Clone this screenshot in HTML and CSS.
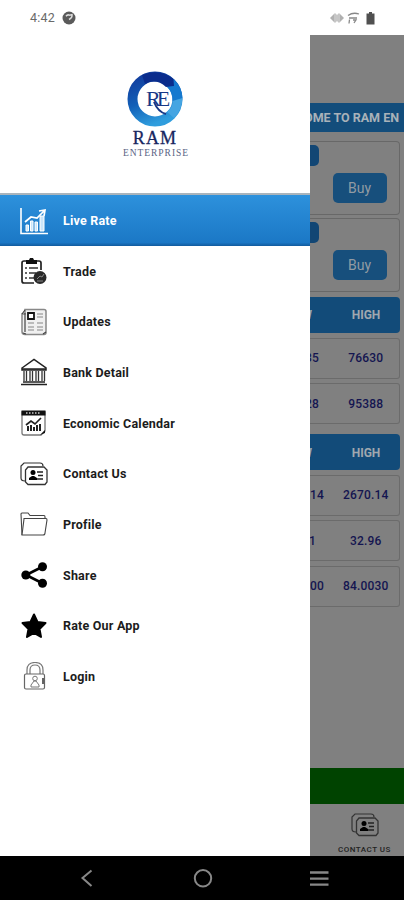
FILE: index.html
```html
<!DOCTYPE html>
<html lang="en">
<head>
<meta charset="utf-8">
<meta name="viewport" content="width=device-width">
<title>Ram Enterprise</title>
<link rel="stylesheet" href="styles.css">
</head>
<body>
<header class="status">
  <span class="clock">4:42</span>
  <svg class="status-app" width="14" height="14" viewBox="0 0 14 14"><circle cx="7" cy="7" r="6.500" fill="#5a5a5a"/><path d="M4 5.200Q5.500 3.200 7.500 4.200L10 3.600Q10.500 6.500 7 8.500" fill="none" stroke="#ddd" stroke-width="1.500"/></svg>
  <svg class="status-icons" width="46" height="14" viewBox="0 0 46 14">
    <path d="M0 7l4-4v8zM14 7l-4-4v8z" fill="#b0b0b0"/><path d="M5 2.500v9M7 3.500v7M9 2.500v9" stroke="#a0a0a0" stroke-width="1.200"/>
    <path d="M18 4.500Q23 1 29 3M19 7h8M19.500 8.500l-.5 4M23 9h3l-2 3" fill="none" stroke="#888" stroke-width="1.300"/>
    <path d="M36.500 2.500H39V1h3v1.500h2.500V13.500h-8z" fill="#505050"/>
  </svg>
</header>
<main class="screen">
  <aside class="drawer">
    <div class="brand">
      <svg class="logo" width="56" height="56" viewBox="0 0 56 56">
        <defs><linearGradient id="ring" x1=".2" y1="0" x2=".6" y2="1"><stop offset="0" stop-color="#1240a0"/><stop offset=".5" stop-color="#1260b8"/><stop offset="1" stop-color="#2f9ddd"/></linearGradient></defs>
        <circle cx="28" cy="28" r="22.500" fill="none" stroke="url(#ring)" stroke-width="10"/>
        <path d="M15 4Q32-3 46 7.500L47 15L39 16Q29 7 18 13z" fill="#0a2c8c"/>
        <path d="M47 8.500Q55 16 55.500 27L45.500 30Q45.500 21 40 16L47 15z" fill="#1579cf"/>
        <path d="M55.500 27Q55 39 47 47L40 41Q46 36 45.500 30z" fill="#45a5e2"/>
        <text class="monogram" x="19" y="35">RE</text>
        <path d="M27 31Q31 41 39 43" fill="none" stroke="#173887" stroke-width="2"/>
      </svg>
      <div class="brand-name">RAM</div>
      <div class="brand-sub">ENTERPRISE</div>
    </div>
    <nav class="menu">
      <a class="item active"><svg class="icon" viewBox="0 0 28 28"><path d="M1 1v25.500h27" fill="none" stroke="#fff" stroke-width="1.600"/><path d="M6 24v-6h2.500v6zM10.500 24V14H13v10zM15 24v-9h2.500v9zM20 24V9h4v15z" fill="#c9e5fa" stroke="#fff"/><path d="M5 15l6-5 6 1 7-7M19 4l6-1-1 6" fill="none" stroke="#fff" stroke-width="1.700"/></svg><span>Live Rate</span></a>
      <a class="item"><svg class="icon" viewBox="0 0 28 28"><path d="M7 4H4Q2 4 2 6v18q0 2 2 2h10M17 4h2q2 0 2 2v7" fill="none" stroke="#222" stroke-width="1.700"/><path d="M6 3h3l1-2h3l1 2h3v4H6z" fill="#111"/><path d="M5 11h2M9 11h9M5 16h2M9 16h7M5 21h2M9 21h5" stroke="#333" stroke-width="1.500"/><circle cx="20" cy="20.500" r="6.500" fill="#292929"/><path d="M17 22l3-3 2 1 2-3M17 24h6" fill="none" stroke="#888"/></svg><span>Trade</span></a>
      <a class="item"><svg class="icon" viewBox="0 0 28 28"><path d="M5 1.500h19q2 0 2 2v21q0 2-2 2H5q-3 0-3-3V6h3z" fill="#f0f0f0" stroke="#888" stroke-width="1.500"/><path d="M5 5v19M2 6l3-4M3 25l3 1M23 26l3-2" stroke="#444" stroke-width="1.200"/><path d="M8 5h6v6H8z" fill="#fff" stroke="#111" stroke-width="1.800"/><path d="M17 6h6M17 9h6M8 15h6M17 15h6M8 19h6M17 19h6M8 22h6M17 22h6" stroke="#bbb" stroke-width="2"/></svg><span>Updates</span></a>
      <a class="item"><svg class="icon" viewBox="0 0 28 28"><path d="M2 10L14 1.500 26 10v2H2z" fill="#fff" stroke="#222" stroke-width="1.500"/><path d="M2 11h24M3 24h22M1 26.500h26" stroke="#222" stroke-width="1.600"/><path d="M4 13v10M6.500 13v10M10 13v10M12.500 13v10M16 13v10M18.500 13v10M22 13v10M24.500 13v10" stroke="#333" stroke-width="1.300"/></svg><span>Bank Detail</span></a>
      <a class="item"><svg class="icon" viewBox="0 0 28 28"><path d="M2 3h23v19l-4 4H4q-2 0-2-2z" fill="#fff" stroke="#777" stroke-width="1.300"/><path d="M1.500 1.500h24v5h-24zM20 26l5-5v3z" fill="#111"/><path d="M6 4h15" stroke="#ccc" stroke-width="1.500" stroke-dasharray="1.500 1.500"/><path d="M8 22v-5M11 22v-6M14 22v-4M17 22v-6M20 22v-7" stroke="#222" stroke-width="2"/><path d="M6 16l5-4 4 3 6-6" fill="none" stroke="#222" stroke-width="1.700"/></svg><span>Economic Calendar</span></a>
      <a class="item"><svg class="icon" viewBox="0 0 28 28"><use href="#cards"/></svg><span>Contact Us</span></a>
      <a class="item"><svg class="icon" viewBox="0 0 28 28"><path d="M2 25L1 4q0-1 1-1h6l2 2.500h14q1 0 1 1.500v1" fill="none" stroke="#444" stroke-width="1.100"/><path d="M4 8.500h22q1 0 1 1.500l-2 13q0 2-2 2H2l2-16z" fill="#fff" stroke="#444" stroke-width="1.100"/></svg><span>Profile</span></a>
      <a class="item"><svg class="icon" viewBox="0 0 28 28"><path d="M22 6L6 14l16 8" fill="none" stroke="#000" stroke-width="2.600"/><circle cx="22.500" cy="5.800" r="4.500"/><circle cx="5.800" cy="14" r="4.500"/><circle cx="22.500" cy="22.200" r="4.500"/></svg><span>Share</span></a>
      <a class="item"><svg class="icon" viewBox="0 0 28 28"><path d="M14 2.500l3.500 7.500 8 1-6 6 1.500 8-7-4-7 4 1.500-8-6-6 8-1z" stroke="#000" stroke-width="2" stroke-linejoin="round"/></svg><span>Rate Our App</span></a>
      <a class="item"><svg class="icon" viewBox="0 0 28 28"><path d="M7 12V8q0-7.500 8-7.500T23 8v4M10 12V8q0-5 5-5t5 5v4" fill="none" stroke="#777" stroke-width="1.200"/><rect x="4.500" y="12" width="20" height="15" rx="1.500" fill="#fff" stroke="#666" stroke-width="1.200"/><circle cx="15" cy="16.500" r="2.300" fill="none" stroke="#777"/><path d="M11 25v-2l3-4h2l3 4v2z" fill="none" stroke="#777"/><path d="M23 16v6" stroke="#333" stroke-width="1.500"/></svg><span>Login</span></a>
    </nav>
  </aside>
  <section class="page">
    <div class="ticker">OME TO RAM EN</div>
    <div class="card"><span class="tab"></span><span class="buy">Buy</span></div>
    <div class="card"><span class="tab"></span><span class="buy">Buy</span></div>
    <div class="head"><span class="low w3">LOW</span><span class="high">HIGH</span></div>
    <div class="row"><span class="low w5">35</span><span class="high">76630</span></div>
    <div class="row"><span class="low w5">28</span><span class="high">95388</span></div>
    <div class="head second"><span class="low w3">LOW</span><span class="high">HIGH</span></div>
    <div class="row"><span class="low w7">14</span><span class="high">2670.14</span></div>
    <div class="row"><span class="low w4">1</span><span class="high">32.96</span></div>
    <div class="row"><span class="low w7">00</span><span class="high">84.0030</span></div>
    <div class="green"></div>
    <div class="contact">
      <svg width="28" height="28" viewBox="0 0 28 28"><g id="cards"><path d="M5 21Q1 21 1 18V6l3-3h16q3 0 3 3" fill="none" stroke="#333" stroke-width="1.200"/><path d="M8 7h16l3 3v12l-2 2.500H8L5.500 22V10z" fill="none" stroke="#333" stroke-width="1.300"/><circle cx="13" cy="12.500" r="2.500"/><path d="M9 20v-2l3-2h2l3 2v2z"/><path d="M17 12h6M18 15.500h5M17 19h6" stroke="#222" stroke-width="1.500"/></g></svg>
      <span>CONTACT US</span>
    </div>
  </section>
</main>
<footer class="navbar">
  <svg width="404" height="44" viewBox="0 0 404 44"><g fill="none" stroke="#888" stroke-width="2"><path d="M91.500 14.500L82.500 22l9 8"/><circle cx="203" cy="22.300" r="8.200"/><path d="M310 16.500h18.500M310 22.700h18.500M310 28.700h18.500" stroke-width="2.300"/></g></svg>
</footer>
</body>
</html>
```
FILE: styles.css
```css
* { box-sizing: border-box; }
body { margin: 0; width: 404px; height: 900px; overflow: hidden; background: #fff; font-family: Roboto, sans-serif; }
svg { display: block; }
.status { height: 34.500px; display: flex; align-items: center; padding: 1px 28px 0 30px; }
.clock { font-size: 12.500px; color: #6a6a6a; letter-spacing: .2px; width: 32px; }
.status-icons { margin-left: auto; }
.screen { display: flex; height: 821.500px; }
.drawer { width: 310px; flex: none; background: #fff; }
.brand { height: 160.500px; padding-top: 36px; display: flex; flex-direction: column; align-items: center; border-bottom: 2px solid #a9b4bc; }
.monogram { font: 22px "Liberation Serif", serif; fill: #173887; letter-spacing: -4px; }
.brand-name { font: 18px/20px "Liberation Serif", serif; color: #17265f; letter-spacing: 1.200px; -webkit-text-stroke: .3px #17265f; margin-top: 1px; }
.brand-sub { font: 9.500px/11px "Liberation Serif", serif; color: #5a6384; letter-spacing: .95px; padding-left: 2px; }
.item { display: flex; align-items: center; height: 50.650px; padding: .5px 0 0 19.500px; gap: 15.500px; font-size: 12.500px; font-weight: 700; color: #1c1c1c; letter-spacing: .2px; }
.icon { width: 28px; height: 28px; }
.active { color: #fff; background: linear-gradient(#2d91dc, #1b78c6 93%, #125b9e); }
.page { flex: 1; min-width: 0; overflow: hidden; background: #808080; display: flex; flex-direction: column; }
.ticker { height: 29px; margin: 68.500px 0 9px; background: #134d7b; color: #a9b2b9; font-size: 12.500px; font-weight: 700; line-height: 30px; padding-right: 5px; white-space: nowrap; display: flex; justify-content: flex-end; flex: none; }
.card { height: 73.500px; margin: 0 4.500px 3.700px 0; border: 1px solid #686868; border-left: 0; border-radius: 0 4px 4px 0; display: flex; align-items: flex-start; justify-content: space-between; padding: 3px 12px 0 0; }
.tab { width: 9px; height: 21px; background: #124674; border-radius: 0 5px 5px 0; }
.buy { width: 54px; height: 30px; margin-top: 27.500px; border-radius: 5px; background: #174f7c; color: #929ba3; font-size: 14px; line-height: 31px; text-align: center; }
.head, .row { display: flex; align-items: center; margin-right: 4.500px; flex: none; }
.head { height: 36px; margin-top: 1.500px; margin-bottom: 5px; padding-top: 1px; background: #124b79; border-radius: 0 4px 4px 0; color: #a0a8af; font-size: 12px; font-weight: 700; }
.second { margin-top: 5.500px; margin-bottom: 4.500px; }
.row { height: 41px; margin-bottom: 4.500px; border: 1px solid #6b6b6b; border-left: 0; border-radius: 0 3px 3px 0; color: #141550; font-size: 12px; font-weight: 500; letter-spacing: .2px; }
.low { display: flex; justify-content: flex-end; flex: none; }
.w3 { width: 2px; margin-right: 21px; }
.w4 { width: 6px; margin-right: 17px; }
.w5 { width: 9px; margin-right: 14px; }
.w7 { width: 14px; margin-right: 9px; }
.high { width: 66px; text-align: center; }
.green { height: 36px; margin-top: auto; background: #004300; flex: none; }
.contact { height: 52px; flex: none; display: flex; flex-direction: column; align-items: center; padding: 7px 0 0 15px; font-size: 8px; font-weight: 500; color: #222; letter-spacing: .5px; }
.contact span { margin-top: 6px; }
.navbar { height: 44px; background: #000; }
```
